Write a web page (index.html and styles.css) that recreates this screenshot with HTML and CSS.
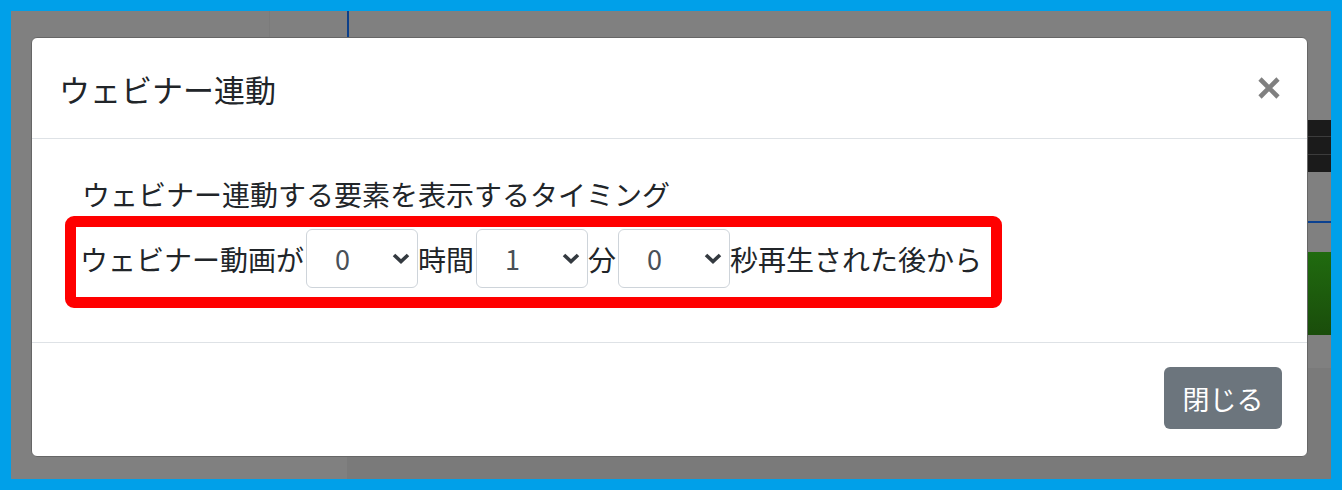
FILE: index.html
```html
<!DOCTYPE html>
<html lang="ja">
<head>
  <meta charset="UTF-8" />
  <meta name="viewport" content="width=device-width, initial-scale=1.0"/>
  <title>ウェビナー連動</title>
  <link rel="stylesheet" href="styles.css">
</head>
<body>
  <div class="viewport">
    <div class="page">
      <div class="sidebar"></div>
      <div class="nav"></div>
      <div class="main">
        <div class="dark-bar">
          <div class="dark-row"></div>
          <div class="dark-row"></div>
          <div class="dark-row"></div>
        </div>
        <div class="blue-rule"></div>
        <div class="green-block"></div>
        <div class="lower-area"></div>
      </div>
    </div>

    <div class="modal">
      <div class="modal-header">
        <h5 class="modal-title">ウェビナー連動</h5>
        <button class="close" aria-label="閉じる">
          <svg width="22" height="22" viewBox="0 0 22 22">
            <path d="M2 2 L20 20 M20 2 L2 20" stroke="#808080" stroke-width="4.6" fill="none"/>
          </svg>
        </button>
      </div>

      <div class="modal-body">
        <p class="timing-label">ウェビナー連動する要素を表示するタイミング</p>
        <div class="timing-row">
          <span>ウェビナー動画が</span>
          <div class="select">
            <span class="select-value">0</span>
            <svg class="chevron" width="18" height="11" viewBox="0 0 18 11">
              <path d="M2 2 L9 8.5 L16 2" stroke="#343a40" stroke-width="3.6" fill="none"/>
            </svg>
          </div>
          <span>時間</span>
          <div class="select">
            <span class="select-value">1</span>
            <svg class="chevron" width="18" height="11" viewBox="0 0 18 11">
              <path d="M2 2 L9 8.5 L16 2" stroke="#343a40" stroke-width="3.6" fill="none"/>
            </svg>
          </div>
          <span>分</span>
          <div class="select">
            <span class="select-value">0</span>
            <svg class="chevron" width="18" height="11" viewBox="0 0 18 11">
              <path d="M2 2 L9 8.5 L16 2" stroke="#343a40" stroke-width="3.6" fill="none"/>
            </svg>
          </div>
          <span>秒再生された後から</span>
        </div>
      </div>

      <div class="modal-footer">
        <button class="btn-secondary">閉じる</button>
      </div>
    </div>
  </div>
</body>
</html>
```

FILE: styles.css
```css
* {
  box-sizing: border-box;
  margin: 0;
  padding: 0;
}

body {
  font-family: "Noto Sans CJK JP", "Noto Sans", sans-serif;
  background-color: #00a0e9;
  color: #212529;
  padding: 11px;
  height: 490px;
  overflow: hidden;
}

.viewport {
  position: relative;
  height: 468px;
  background-color: #808080;
  overflow: hidden;
}

/* page behind the backdrop */
.page {
  display: flex;
  height: 100%;
}

.sidebar {
  width: 259px;
  height: 26px;
  border-right: 1px solid #7b7b7b;
}

.nav {
  width: 77px;
}

.main {
  flex: 1;
  display: flex;
  flex-direction: column;
  padding-top: 109px;
  position: relative;
}

.main::before {
  content: "";
  position: absolute;
  left: 0;
  top: 0;
  width: 2px;
  height: 26px;
  background-color: #0b3f8a;
}

.dark-bar {
  height: 52px;
  background-color: #1b1b1b;
  display: flex;
  flex-direction: column;
  gap: 1px;
}

.dark-row {
  flex: 1;
  border-bottom: 1px solid #3c3c3c;
}

.dark-row:last-child {
  border-bottom: none;
}

.blue-rule {
  height: 2px;
  margin-top: 49px;
  background-color: #0b4190;
}

.green-block {
  height: 83px;
  margin-top: 29px;
  background: linear-gradient(#206b0f, #1a4d0b);
}

.lower-area {
  flex: 1;
  margin-top: 33px;
  background-color: #7a7a7a;
}

/* dialog */
.modal {
  position: absolute;
  left: 20px;
  top: 26px;
  width: 1277px;
  height: 420px;
  background-color: white;
  border: 1px solid #666;
  border-radius: 6px;
  display: flex;
  flex-direction: column;
}

.modal-header {
  height: 101px;
  display: flex;
  align-items: center;
  justify-content: space-between;
  padding: 0 27px 0 27px;
  border-bottom: 1px solid #dee2e6;
}

.modal-title {
  font-size: 31px;
  font-weight: normal;
  line-height: 1;
}

.close {
  background: none;
  border: none;
  width: 22px;
  height: 22px;
  display: flex;
  cursor: pointer;
}

.modal-body {
  height: 204px;
  padding: 33px 48px 0 50px;
  font-size: 28px;
  border-bottom: 1px solid #dee2e6;
}

.timing-label {
  line-height: 44px;
}

.timing-row {
  display: flex;
  align-items: center;
  width: fit-content;
  margin-left: -17px;
  padding: 2px 9px 9px 4px;
  border: 11px solid #ff0000;
  border-radius: 9px;
  line-height: 1;
}

.select {
  width: 112px;
  height: 59px;
  margin-left: 2px;
  border: 1px solid #ced4da;
  border-radius: 6px;
  display: flex;
  align-items: center;
  justify-content: space-between;
  padding: 0 7px 0 28px;
}

.select-value {
  font-size: 27px;
  color: #495057;
}

.modal-footer {
  flex: 1;
  display: flex;
  justify-content: flex-end;
  align-items: flex-start;
  padding: 24px 25px 0;
}

.btn-secondary {
  width: 118px;
  height: 62px;
  font-family: inherit;
  font-size: 27px;
  color: white;
  background-color: #6c757d;
  border: none;
  border-radius: 6px;
  cursor: pointer;
}
```
